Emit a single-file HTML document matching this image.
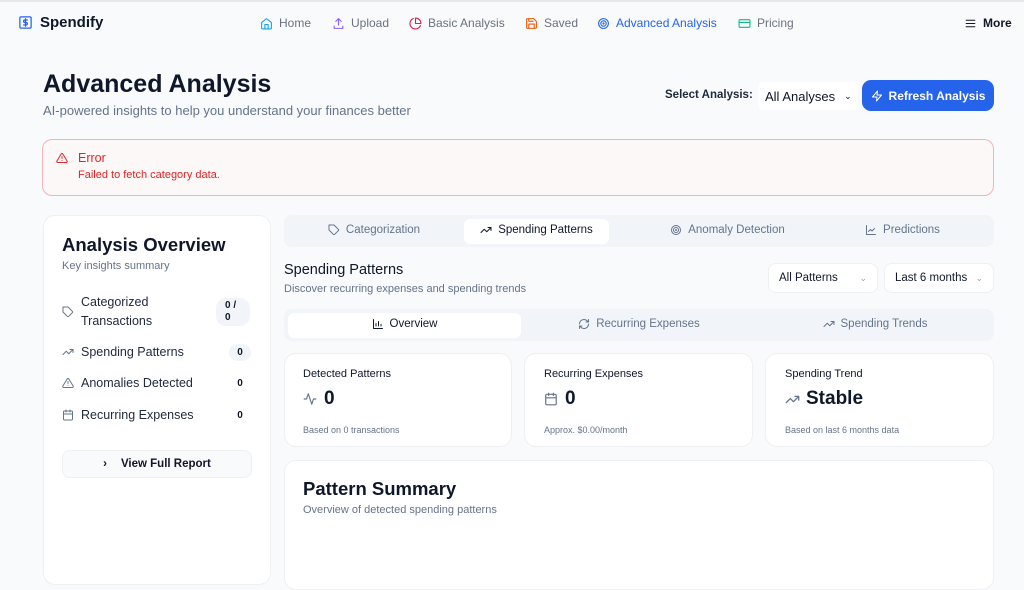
<!DOCTYPE html>
<html><head><meta charset="utf-8"><style>
*{box-sizing:border-box;margin:0;padding:0}
body{width:1024px;height:571px;overflow:hidden;background:#f8fafc;font-family:"Liberation Sans",sans-serif;color:#0f172a;position:relative}
.a{position:absolute}
svg{fill:none;stroke:currentColor;stroke-width:2;stroke-linecap:round;stroke-linejoin:round}
.nav{top:0;left:0;width:1024px;height:44px;border-top:2px solid #e5e7eb}
.ni{font-size:12px;color:#6b7280;display:flex;align-items:center;gap:6px;top:14px}
.card{background:#fff;border:1px solid #eef0f3;border-radius:12px}
.tabs{background:#f1f5f9;border-radius:8px}
.tab{font-size:11.5px;color:#64748b;display:flex;align-items:center;gap:6px;justify-content:center}
.sel{background:#fff;border:1px solid #eef0f3;border-radius:8px;font-size:11.5px;display:flex;align-items:center;justify-content:space-between;padding:0 10px}
.badge{background:#f1f5f9;border-radius:10px;font-size:10px;font-weight:bold;text-align:center}
.li{font-size:12.5px;color:#1e293b;display:flex;align-items:center;gap:7px;left:62px}
</style></head><body>
<div class="a nav">
 <div class="a" style="left:18px;top:12px;display:flex;align-items:center;gap:7px;font-weight:bold;font-size:15px"><svg width="15" height="15" viewBox="0 0 24 24" style="color:#2563eb"><rect x="3" y="3" width="18" height="18" rx="2"/><path d="M15 8h-4a2 2 0 0 0 0 4h2a2 2 0 0 1 0 4H9M12 6v12"/></svg>Spendify</div>
 <div class="a ni" style="left:260px"><svg width="13" height="13" viewBox="0 0 24 24" style="color:#0ea5e9"><path d="M3 10l9-7 9 7v10a2 2 0 0 1-2 2H5a2 2 0 0 1-2-2z"/><path d="M9 22v-8h6v8"/></svg>Home</div>
 <div class="a ni" style="left:332px"><svg width="13" height="13" viewBox="0 0 24 24" style="color:#8b5cf6"><path d="M12 3v12M7 8l5-5 5 5M4 17v4h16v-4"/></svg>Upload</div>
 <div class="a ni" style="left:409px"><svg width="13" height="13" viewBox="0 0 24 24" style="color:#e11d48"><path d="M21 15.9A10 10 0 1 1 8 2.8"/><path d="M22 12A10 10 0 0 0 12 2v10z"/></svg>Basic Analysis</div>
 <div class="a ni" style="left:525px"><svg width="13" height="13" viewBox="0 0 24 24" style="color:#ea580c"><path d="M19 21H5a2 2 0 0 1-2-2V5a2 2 0 0 1 2-2h11l5 5v11a2 2 0 0 1-2 2z"/><path d="M17 21v-8H7v8M7 3v5h8"/></svg>Saved</div>
 <div class="a ni" style="left:597px;color:#2563eb"><svg width="13" height="13" viewBox="0 0 24 24"><circle cx="12" cy="12" r="9"/><circle cx="12" cy="12" r="5"/><circle cx="12" cy="12" r="1"/></svg>Advanced Analysis</div>
 <div class="a ni" style="left:738px"><svg width="13" height="13" viewBox="0 0 24 24" style="color:#10b981"><rect x="2" y="5" width="20" height="14" rx="2"/><path d="M2 10h20"/></svg>Pricing</div>
 <div class="a ni" style="left:964px;color:#111827;font-weight:bold"><svg width="13" height="13" viewBox="0 0 24 24"><path d="M4 6h16M4 12h16M4 18h16"/></svg>More</div>
</div>
<div class="a" style="left:43px;top:70px;font-size:25px;font-weight:bold">Advanced Analysis</div>
<div class="a" style="left:43px;top:103px;font-size:13px;color:#64748b">AI-powered insights to help you understand your finances better</div>
<div class="a" style="left:665px;top:89px;font-size:11.5px;font-weight:bold;color:#1e293b">Select Analysis:</div>
<div class="a" style="left:758px;top:82px;width:100px;height:28px;background:#fff;border-radius:6px;font-size:13px;display:flex;align-items:center;padding-left:7px">All Analyses <span style="margin-left:9px;font-size:9px">&#8964;</span></div>
<div class="a" style="left:862px;top:80px;width:132px;height:31px;background:#2563eb;border-radius:9px;color:#fff;font-size:12px;font-weight:bold;display:flex;align-items:center;justify-content:center;gap:6px"><svg width="12" height="12" viewBox="0 0 24 24"><path d="M13 2L3 14h9l-1 8 10-12h-9z"/></svg>Refresh Analysis</div>
<div class="a" style="left:42px;top:139px;width:952px;height:57px;border:1px solid #f3b4b4;border-radius:10px;background:#fdf8f8"></div>
<svg class="a" style="left:56px;top:152px;color:#dc2626" width="12" height="12" viewBox="0 0 24 24"><path d="M10.3 3.9L1.8 18a2 2 0 0 0 1.7 3h17a2 2 0 0 0 1.7-3L13.7 3.9a2 2 0 0 0-3.4 0zM12 9v4M12 17h0"/></svg>
<div class="a" style="left:78px;top:151px;font-size:12.5px;color:#dc2626">Error</div>
<div class="a" style="left:78px;top:169px;font-size:11px;color:#dc2626">Failed to fetch category data.</div>
<div class="a card" style="left:43px;top:215px;width:228px;height:370px"></div>
<div class="a" style="left:62px;top:234px;font-size:18.5px;font-weight:bold">Analysis Overview</div>
<div class="a" style="left:62px;top:260px;font-size:11px;color:#64748b">Key insights summary</div>
<div class="a li" style="top:293px;line-height:19px"><svg width="12" height="12" viewBox="0 0 24 24" style="color:#64748b"><path d="M20.6 13.4l-7.2 7.2a2 2 0 0 1-2.8 0L2 12V2h10l8.6 8.6a2 2 0 0 1 0 2.8z"/></svg><span>Categorized<br>Transactions</span></div>
<div class="a badge" style="left:216px;top:298px;width:34px;height:28px;padding-top:2px;line-height:12px;text-align:left;padding-left:9px">0 /<br>0</div>
<div class="a li" style="top:345px"><svg width="12" height="12" viewBox="0 0 24 24" style="color:#64748b"><path d="M22 7l-8.5 8.5-5-5L2 17M16 7h6v6"/></svg>Spending Patterns</div>
<div class="a badge" style="left:229px;top:344px;width:22px;height:17px;line-height:17px">0</div>
<div class="a li" style="top:376px"><svg width="12" height="12" viewBox="0 0 24 24" style="color:#64748b"><path d="M10.3 3.9L1.8 18a2 2 0 0 0 1.7 3h17a2 2 0 0 0 1.7-3L13.7 3.9a2 2 0 0 0-3.4 0zM12 9v4M12 17h0"/></svg>Anomalies Detected</div>
<div class="a badge" style="left:229px;top:375px;width:22px;height:17px;line-height:17px;background:#fff">0</div>
<div class="a li" style="top:408px"><svg width="12" height="12" viewBox="0 0 24 24" style="color:#64748b"><rect x="3" y="4" width="18" height="18" rx="2"/><path d="M16 2v4M8 2v4M3 10h18"/></svg>Recurring Expenses</div>
<div class="a badge" style="left:229px;top:407px;width:22px;height:17px;line-height:17px;background:#fff">0</div>
<div class="a" style="left:62px;top:450px;width:190px;height:28px;border:1px solid #eef0f3;border-radius:8px;background:#f8fafc;font-size:11.5px;font-weight:bold;display:flex;align-items:center;justify-content:center;gap:14px"><span>&#8250;</span>View Full Report</div>
<div class="a tabs" style="left:284px;top:215px;width:710px;height:32px"></div>
<div class="a" style="left:464px;top:219px;width:145px;height:25px;background:#fff;border-radius:6px"></div>
<div class="a tab" style="left:284px;top:224px;width:180px"><svg width="12" height="12" viewBox="0 0 24 24"><path d="M20.6 13.4l-7.2 7.2a2 2 0 0 1-2.8 0L2 12V2h10l8.6 8.6a2 2 0 0 1 0 2.8z"/></svg>Categorization</div>
<div class="a tab" style="left:464px;top:224px;width:145px;color:#0f172a"><svg width="12" height="12" viewBox="0 0 24 24"><path d="M22 7l-8.5 8.5-5-5L2 17M16 7h6v6"/></svg>Spending Patterns</div>
<div class="a tab" style="left:640px;top:224px;width:175px"><svg width="12" height="12" viewBox="0 0 24 24"><circle cx="12" cy="12" r="9"/><circle cx="12" cy="12" r="5"/><circle cx="12" cy="12" r="1"/></svg>Anomaly Detection</div>
<div class="a tab" style="left:815px;top:224px;width:175px"><svg width="12" height="12" viewBox="0 0 24 24"><path d="M3 3v18h18M7 15l4-4 3 3 5-5"/></svg>Predictions</div>
<div class="a" style="left:284px;top:262px;font-size:14.5px">Spending Patterns</div>
<div class="a" style="left:284px;top:283px;font-size:11px;color:#64748b">Discover recurring expenses and spending trends</div>
<div class="a sel" style="left:768px;top:263px;width:110px;height:30px">All Patterns<span style="color:#94a3b8;font-size:9px">&#8964;</span></div>
<div class="a sel" style="left:884px;top:263px;width:110px;height:30px">Last 6 months<span style="color:#94a3b8;font-size:9px">&#8964;</span></div>
<div class="a tabs" style="left:284px;top:309px;width:710px;height:32px"></div>
<div class="a" style="left:288px;top:313px;width:233px;height:25px;background:#fff;border-radius:6px"></div>
<div class="a tab" style="left:288px;top:318px;width:233px;color:#0f172a"><svg width="12" height="12" viewBox="0 0 24 24"><path d="M3 3v18h18M8 16v-5M13 16V7M18 16v-3"/></svg>Overview</div>
<div class="a tab" style="left:521px;top:318px;width:236px"><svg width="12" height="12" viewBox="0 0 24 24"><path d="M21 12a9 9 0 0 1-15.5 6.2L3 16M3 12a9 9 0 0 1 15.5-6.2L21 8M21 3v5h-5M3 21v-5h5"/></svg>Recurring Expenses</div>
<div class="a tab" style="left:757px;top:318px;width:236px"><svg width="12" height="12" viewBox="0 0 24 24"><path d="M22 7l-8.5 8.5-5-5L2 17M16 7h6v6"/></svg>Spending Trends</div>
<div class="a card" style="left:284px;top:353px;width:228px;height:94px"></div>
<div class="a card" style="left:524px;top:353px;width:229px;height:94px"></div>
<div class="a card" style="left:765px;top:353px;width:229px;height:94px"></div>
<div class="a" style="left:303px;top:368px;font-size:11px">Detected Patterns</div>
<div class="a" style="left:303px;top:388px;font-size:19px;font-weight:bold;display:flex;align-items:center;gap:7px"><svg width="14" height="14" viewBox="0 0 24 24" style="color:#64748b"><path d="M22 12h-4l-3 9L9 3l-3 9H2"/></svg>0</div>
<div class="a" style="left:303px;top:425px;font-size:9px;color:#64748b">Based on 0 transactions</div>
<div class="a" style="left:544px;top:368px;font-size:11px">Recurring Expenses</div>
<div class="a" style="left:544px;top:388px;font-size:19px;font-weight:bold;display:flex;align-items:center;gap:7px"><svg width="14" height="14" viewBox="0 0 24 24" style="color:#64748b"><rect x="3" y="4" width="18" height="18" rx="2"/><path d="M16 2v4M8 2v4M3 10h18"/></svg>0</div>
<div class="a" style="left:544px;top:425px;font-size:9px;color:#64748b">Approx. $0.00/month</div>
<div class="a" style="left:785px;top:368px;font-size:11px">Spending Trend</div>
<div class="a" style="left:785px;top:388px;font-size:19px;font-weight:bold;display:flex;align-items:center;gap:6px"><svg width="15" height="15" viewBox="0 0 24 24" style="color:#64748b"><path d="M22 7l-8.5 8.5-5-5L2 17M16 7h6v6"/></svg>Stable</div>
<div class="a" style="left:785px;top:425px;font-size:9px;color:#64748b">Based on last 6 months data</div>
<div class="a card" style="left:284px;top:460px;width:710px;height:130px"></div>
<div class="a" style="left:303px;top:478px;font-size:18.5px;font-weight:bold">Pattern Summary</div>
<div class="a" style="left:303px;top:504px;font-size:11px;color:#64748b">Overview of detected spending patterns</div>
</body></html>
